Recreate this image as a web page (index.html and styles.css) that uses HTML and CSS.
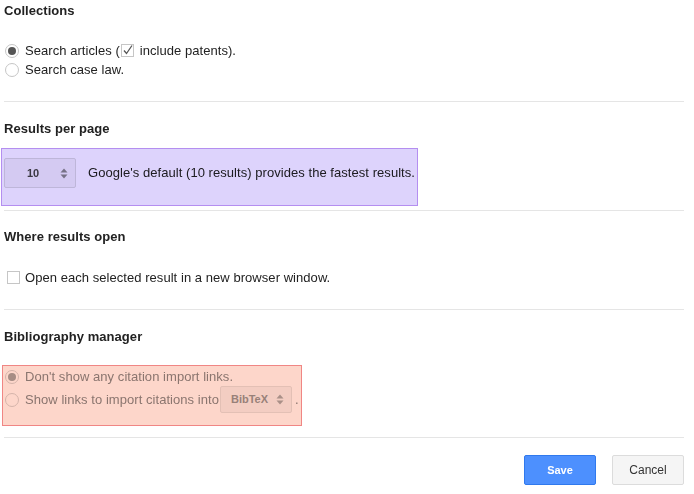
FILE: index.html
```html
<!DOCTYPE html>
<html>
<head>
<meta charset="utf-8">
<link rel="stylesheet" href="styles.css">
</head>
<body>
<div class="page">
  <div class="sec sec-first">
    <h2>Collections</h2>
    <div class="opts">
      <div class="row"><span class="radio on"></span>Search articles (<span class="cb"><svg width="13" height="13" viewBox="0 0 13 13"><polyline points="3,6.5 5.5,9.5 11,1.5" fill="none" stroke="#555" stroke-width="1.3"/></svg></span>include patents).</div>
      <div class="row"><span class="radio"></span>Search case law.</div>
    </div>
  </div>
  <div class="hr"></div>
  <div class="sec sec-rpp">
    <h2>Results per page</h2>
    <div class="hl hl-purple">
      <div class="sel sel-num"><span class="sel-txt">10</span><svg class="arr" width="8" height="11" viewBox="0 0 8 11"><polygon points="0.5,4.5 7.5,4.5 4,0.5" fill="#888"/><polygon points="0.5,6.5 7.5,6.5 4,10.5" fill="#888"/></svg></div>
      <span class="hint">Google's default (10 results) provides the fastest results.</span>
    </div>
  </div>
  <div class="hr"></div>
  <div class="sec">
    <h2>Where results open</h2>
    <div class="opts opts-cb">
      <div class="row"><span class="cb cb-lead"></span>Open each selected result in a new browser window.</div>
    </div>
  </div>
  <div class="hr"></div>
  <div class="sec sec-bib">
    <h2>Bibliography manager</h2>
    <div class="hl hl-red">
      <div class="row dis r1"><span class="radio on dis-radio"></span>Don't show any citation import links.</div>
      <div class="row dis r2"><span class="radio dis-radio"></span>Show links to import citations into<div class="sel sel-bib"><span class="sel-txt">BibTeX</span><svg class="arr" width="8" height="11" viewBox="0 0 8 11"><polygon points="0.5,4.5 7.5,4.5 4,0.5" fill="#aaa"/><polygon points="0.5,6.5 7.5,6.5 4,10.5" fill="#aaa"/></svg></div>.</div>
    </div>
  </div>
  <div class="hr"></div>
  <div class="actions">
    <button class="btn btn-save">Save</button>
    <button class="btn btn-cancel">Cancel</button>
  </div>
</div>
</body>
</html>
```

FILE: styles.css
```css
html, body {
  margin: 0;
  padding: 0;
  background: #fff;
}
body {
  font-family: "Liberation Sans", Arial, sans-serif;
  font-size: 13px;
  color: #222;
  letter-spacing: 0.05px;
}
.page {
  width: 680px;
  margin-left: 4px;
}
h2 {
  margin: 0;
  font-size: 13px;
  font-weight: bold;
  line-height: 20px;
  color: #222;
}
.sec {
  padding-top: 16px;
  padding-bottom: 22px;
}
.sec-first {
  padding-top: 1px;
}
.sec-rpp {
  padding-top: 17px;
  padding-bottom: 4px;
}
.sec-bib {
  padding-top: 17px;
  padding-bottom: 11px;
}
.opts {
  margin-top: 20px;
}
.opts-cb {
  margin-top: 21px;
}
.row {
  display: flex;
  align-items: center;
  height: 19px;
  line-height: 19px;
  white-space: nowrap;
}
.radio {
  position: relative;
  box-sizing: border-box;
  width: 14px;
  height: 14px;
  border: 1px solid #c6c6c6;
  border-radius: 50%;
  background: #fff;
  margin-left: 1px;
  margin-right: 6px;
  flex: none;
}
.radio.on::after {
  content: "";
  position: absolute;
  left: 2px;
  top: 2px;
  width: 8px;
  height: 8px;
  border-radius: 50%;
  background: #555;
}
.cb {
  box-sizing: border-box;
  display: inline-block;
  width: 13px;
  height: 13px;
  border: 1px solid #c6c6c6;
  background: #fff;
  margin: 0 6px 0 1px;
  flex: none;
  position: relative;
}
.cb svg {
  position: absolute;
  left: -1px;
  top: -1px;
}
.cb-lead {
  margin-left: 3px;
  margin-right: 5px;
}
.hr {
  height: 1px;
  background: #e5e5e5;
}
.hl {
  position: relative;
  box-sizing: border-box;
  display: flex;
}
.hl::after {
  content: "";
  position: absolute;
  inset: 0;
  box-sizing: border-box;
  mix-blend-mode: multiply;
  pointer-events: none;
}
.hl-purple {
  margin-top: 9px;
  margin-left: -3px;
  width: 417px;
  height: 58px;
  padding: 10px 0 0 3px;
  align-items: flex-start;
}
.hl-purple::after {
  background: #ddd3fc;
  border: 1px solid #b48ef0;
}
.hl-red {
  margin-top: 18px;
  margin-left: -2px;
  width: 300px;
  height: 61px;
  padding: 2px 0 0 2px;
  flex-direction: column;
}
.hl-red::after {
  background: #fdd6ca;
  border: 1px solid #f08684;
}
.sel {
  box-sizing: border-box;
  position: relative;
  display: flex;
  align-items: center;
  border: 1px solid #dcdcdc;
  border-radius: 2px;
  background: #f5f5f5;
  font-size: 11px;
  font-weight: bold;
  color: #444;
  flex: none;
  letter-spacing: 0;
}
.sel .arr {
  position: absolute;
  right: 7px;
  top: 50%;
  margin-top: -5.5px;
}
.sel-num {
  width: 72px;
  height: 30px;
  padding-left: 22px;
}
.hint {
  margin-left: 12px;
  line-height: 30px;
  white-space: nowrap;
}
.dis {
  color: #8c8c8c;
}
.dis-radio {
  border-color: #d6d6d6;
}
.dis-radio.on::after {
  background: #a8a8a8;
}
.r1 {
  height: 20px;
  line-height: 20px;
}
.r2 {
  height: 27px;
  margin-top: -1px;
}
.sel-bib {
  width: 72px;
  height: 27px;
  padding-left: 10px;
  margin-left: 1px;
  margin-right: 3px;
  color: #999;
  border-color: #e5e5e5;
}
.actions {
  display: flex;
  justify-content: flex-end;
  gap: 16px;
  padding-top: 17px;
}
.btn {
  box-sizing: border-box;
  height: 30px;
  width: 72px;
  border-radius: 2px;
  font-family: "Liberation Sans", Arial, sans-serif;
  padding: 0;
  cursor: pointer;
}
.btn-save {
  background: #4d90fe;
  border: 1px solid #3079ed;
  color: #fff;
  font-weight: bold;
  font-size: 11px;
}
.btn-cancel {
  background: #f5f5f5;
  border: 1px solid #dcdcdc;
  color: #333;
  font-size: 12px;
}
```
